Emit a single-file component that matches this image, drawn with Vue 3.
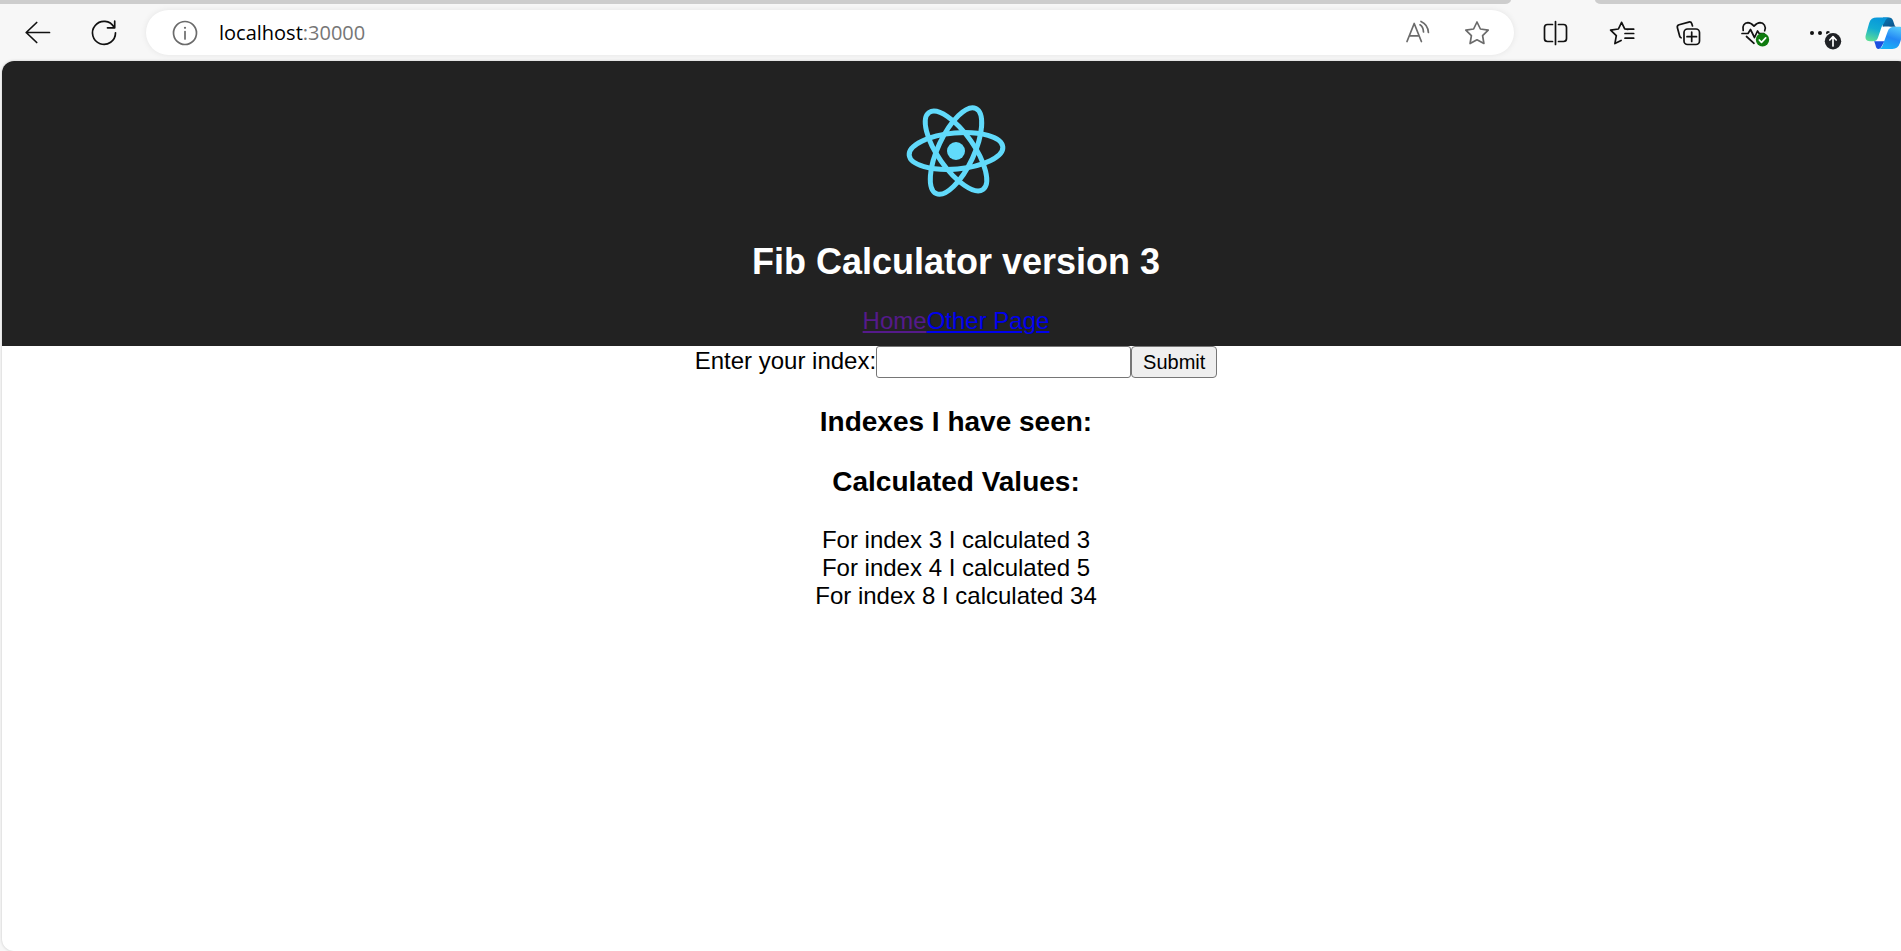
<script setup>
import { ref } from 'vue'

const index = ref('')
const values = [
  { index: 3, value: 3 },
  { index: 4, value: 5 },
  { index: 8, value: 34 },
]
const orbits = [-5, 55, 115]
</script>

<template>
  <div class="browser">
    <div class="tabs">
      <span class="tab-rest tab-left"></span>
      <span class="tab-rest tab-right"></span>
    </div>

    <div class="toolbar">
      <button class="tool" type="button" aria-label="Back">
        <svg viewBox="0 0 48 48"><path d="M35.500 23.500H12.200M22.700 13.500 12.200 23.500l10.500 10" /></svg>
      </button>
      <button class="tool" type="button" aria-label="Refresh">
        <svg viewBox="0 0 48 48"><path d="M35.500 23.800A11.500 11.500 0 1 1 34 18.200M34.700 12.200v6.600h-7.200" /></svg>
      </button>

      <div class="address">
        <button class="inner" type="button" aria-label="Site information">
          <svg viewBox="0 0 48 48">
            <circle cx="24" cy="24" r="11.500" />
            <path d="M24 22.500v7.500" />
            <circle class="solid" cx="24" cy="18.800" r="1.100" />
          </svg>
        </button>
        <span class="url">localhost<span class="port">:30000</span></span>
        <button class="inner speak" type="button" aria-label="Read aloud">
          <svg viewBox="0 0 48 48">
            <path d="m13 32.500 7.200-18 7.200 18M15.400 26.800h9.600M26 15.800c2 1.200 3.300 3.600 3.500 7.200M27 12.500c4 1.700 7 5.500 7.400 11" />
          </svg>
        </button>
        <button class="inner" type="button" aria-label="Add to favorites">
          <svg viewBox="0 0 48 48">
            <path d="m24 13 3.400 7 7.800 1.200-5.600 5.500 1.300 7.800-6.900-3.700-6.900 3.700 1.300-7.800-5.600-5.500 7.800-1.200z" />
          </svg>
        </button>
      </div>

      <div class="actions">
        <button class="tool" type="button" aria-label="Split screen">
          <svg viewBox="0 0 48 48">
            <path d="M21.500 15.500h-5a3 3 0 0 0-3 3v11a3 3 0 0 0 3 3h5M27.500 15.500h5a3 3 0 0 1 3 3v11a3 3 0 0 1-3 3h-5M24.500 12.500v23" />
          </svg>
        </button>
        <button class="tool" type="button" aria-label="Favorites">
          <svg viewBox="0 0 48 48">
            <path d="m31 20.300-3.300-.4-3.100-6.600-3.200 6.700-7.800 1.200 5.700 5.500-1.400 7.900 6.200-3.200M28.500 20.200h8.200M28 24.500h8.700M28 29.200h8.700" />
          </svg>
        </button>
        <button class="tool" type="button" aria-label="Collections">
          <svg viewBox="0 0 48 48">
            <rect x="21" y="20" width="15.500" height="15.500" rx="3.500" />
            <path d="M28.700 23v9.500M24 27.700h9.500M29.500 17l-.7-2.200a2.500 2.500 0 0 0-3-1.700l-9.700 2.600a2.500 2.500 0 0 0-1.700 3l2.300 8.600a2 2 0 0 0 1.400 1.500" />
          </svg>
        </button>
        <button class="tool" type="button" aria-label="Browser essentials">
          <svg viewBox="0 0 48 48">
            <path d="M14.200 21.500c-1.300-4.500 1.200-7.800 4.700-7.900 2.400 0 4 1.300 6.100 3.500 2.100-2.200 3.700-3.500 6.100-3.500 3.600.1 6.400 3.800 4.600 8.200M13 24.500h6l2.500-4 4 8 3-6.500 1.700 2.500H35M17.500 27.500l7.500 6.800" />
            <circle class="green" cx="33.500" cy="30.800" r="6.700" />
            <path class="mark" d="m30.300 31 2.200 2.300 4.200-4.500" />
          </svg>
        </button>
        <button class="tool" type="button" aria-label="Settings and more">
          <svg viewBox="0 0 48 48">
            <circle class="solid" cx="17" cy="24" r="2" />
            <circle class="solid" cx="25" cy="24" r="2" />
            <circle class="solid" cx="33" cy="24" r="2" />
            <circle class="halo" cx="38" cy="32.200" r="9.500" />
            <circle class="dark" cx="38" cy="32.200" r="8.200" />
            <path class="mark" d="M38 37v-9.200M34.800 31l3.200-3.300 3.200 3.300" />
          </svg>
        </button>
        <button class="tool" type="button" aria-label="Copilot">
          <svg viewBox="0 0 48 48">
            <defs>
              <linearGradient id="ribbon-a" x1="0.600" y1="0" x2="0.300" y2="1">
                <stop offset="0" stop-color="#0796dc" />
                <stop offset="0.500" stop-color="#12acd2" />
                <stop offset="1" stop-color="#5bdc97" />
              </linearGradient>
              <linearGradient id="ribbon-b" x1="0.700" y1="0" x2="0.300" y2="1">
                <stop offset="0" stop-color="#52c8fb" />
                <stop offset="0.500" stop-color="#2388f5" />
                <stop offset="1" stop-color="#18b3f5" />
              </linearGradient>
              <linearGradient id="ribbon-c" x1="0" y1="0" x2="1" y2="1">
                <stop offset="0" stop-color="#0a78b5" />
                <stop offset="1" stop-color="#0c4f84" />
              </linearGradient>
            </defs>
            <g class="copilot">
              <path fill="#fff" d="M20 17h10l-6 16h-9z" />
              <path fill="url(#ribbon-c)" d="M22 8.500h6c2 0 3.300 1 4 3l1.500 4.500c.4 1.200 1 1.800 2.200 1.800h-6c-3-.3-5-.3-8 0z" />
              <path fill="#1b4fe0" d="M13 32.200h10.500l-3 5.300c-.8 1.700-1.800 2.700-3.500 2.500-1.500-.2-2-1.600-2.600-4.200-.4-1.800-.8-2.800-1.400-3.600z" />
              <path fill="url(#ribbon-a)" d="M16 8.500h12.500c-2.600.3-4 2.300-5 4.800-1 2.300-2.500 3-3.300 5.700l-3 9c-1 3-2.200 4.200-5.200 4.200H9c-3.600 0-5.200-2.400-4.200-6.200l3.400-12c1.100-3.700 3.500-5.500 7.800-5.500z" />
              <path fill="url(#ribbon-b)" d="M33.500 17.800h4.500c3.700 0 5.200 2.400 4.100 6.200l-3.300 10.300c-1.200 3.800-3.500 5.700-7.500 5.700H17c2.500 0 3.900-1.600 4.900-4.300L26.500 23c1.200-3.600 3.300-5.200 7-5.200z" />
            </g>
          </svg>
        </button>
      </div>
    </div>

    <div class="page">
      <header class="header">
        <svg class="logo" viewBox="-60 -60 120 120" role="img" aria-label="React">
          <ellipse v-for="a in orbits" :key="a" rx="47" ry="18" :transform="`rotate(${a})`" />
          <circle r="9" />
        </svg>
        <h1>Fib Calculator version 3</h1>
        <a class="visited" href="#/">Home</a><a href="#/otherpage">Other Page</a>
      </header>
      <main>
        <form @submit.prevent="index = ''">
          <label for="index">Enter your index:</label><input id="index" v-model="index" type="text" autocomplete="off" /><button type="submit">Submit</button>
        </form>
        <h3>Indexes I have seen:</h3>
        <h3>Calculated Values:</h3>
        <div v-for="v in values" :key="v.index">For index {{ v.index }} I calculated {{ v.value }}</div>
      </main>
    </div>
  </div>
</template>

<style>
body {
  margin: 0;
}
</style>

<style scoped>
.browser {
  display: flex;
  flex-direction: column;
  min-height: 100vh;
  overflow: hidden;
  background: #f7f7f7;
}
.tabs {
  display: flex;
  justify-content: space-between;
  gap: 84px;
  height: 4px;
}
.tab-rest {
  background: #cdcdcd;
}
.tab-left {
  flex: 1;
  border-bottom-right-radius: 6px 4px;
}
.tab-right {
  width: 306px;
  border-bottom-left-radius: 6px 4px;
}
.toolbar {
  display: flex;
  align-items: center;
  height: 57px;
  padding-left: 5px;
}
.toolbar button {
  display: flex;
  flex: none;
  align-items: center;
  justify-content: center;
  height: 48px;
  padding: 0;
  border: 0;
  background: none;
  color: #111;
}
.toolbar .tool {
  width: 66px;
}
.toolbar svg {
  flex: none;
  width: 48px;
  height: 48px;
  fill: none;
  stroke: currentColor;
  stroke-width: 1.7;
  stroke-linecap: round;
  stroke-linejoin: round;
}
.toolbar .solid {
  fill: currentColor;
  stroke: none;
}
.toolbar .green {
  fill: #0f7b0f;
  stroke: none;
}
.toolbar .dark {
  fill: #202226;
  stroke: none;
}
.toolbar .halo {
  fill: #f7f7f7;
  stroke: none;
}
.toolbar .mark {
  stroke: #fff;
}
.copilot {
  stroke: none;
}
.address {
  display: flex;
  flex: 1;
  align-items: center;
  height: 45px;
  margin: 0 8px 0 9px;
  padding: 0 13px 0 15px;
  border-radius: 23px;
  background: #fff;
  box-shadow: 0 0 6px rgba(0, 0, 0, 0.08);
}
.address .inner {
  width: 48px;
  color: #6b6b6b;
}
.address .speak {
  margin-right: 11px;
}
.url {
  flex: 1;
  margin-left: 10px;
  color: #000;
  font: 20px/28px "Open Sans", "Noto Sans", sans-serif;
}
.port {
  color: #767676;
}
.actions {
  display: flex;
  margin-right: -17px;
}
.page {
  flex: 1;
  margin: 0 -9px 0 2px;
  overflow: hidden;
  border-radius: 12px;
  background: #fff;
  box-shadow: 0 0 3px rgba(0, 0, 0, 0.2);
  color: #000;
  font: 24px/28px "Liberation Sans", Arial, sans-serif;
  text-align: center;
}
.header {
  box-sizing: border-box;
  height: 285px;
  padding: 30px;
  background: #222;
}
.logo {
  display: block;
  width: 120px;
  height: 120px;
  margin: 0 auto;
  fill: none;
  stroke: #61dafb;
  stroke-width: 5;
}
.logo circle {
  fill: #61dafb;
  stroke: none;
}
h1 {
  margin: 30px 0 24px;
  color: #fff;
  font-size: 36px;
  line-height: 42px;
}
a {
  color: #00e;
}
.visited {
  color: #551a8b;
}
form input {
  box-sizing: border-box;
  width: 255px;
  height: 32px;
  padding: 2px 3px;
  border: 1px solid #767676;
  border-radius: 3px;
  background: #fff;
  font: 20px "Liberation Sans", Arial, sans-serif;
}
form button {
  box-sizing: border-box;
  height: 32px;
  padding: 1px 11px;
  border: 1px solid #767676;
  border-radius: 4px;
  background: #efefef;
  color: #000;
  font: 20px "Liberation Sans", Arial, sans-serif;
}
h3 {
  margin: 28px 0;
  font-size: 28px;
  line-height: 32px;
}
</style>
